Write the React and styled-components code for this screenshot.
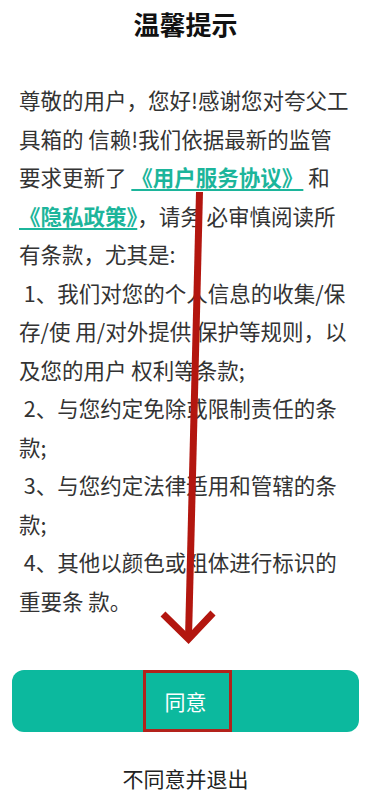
import React from "react";
import styled, { createGlobalStyle } from "styled-components";

const GlobalStyle = createGlobalStyle`
  html, body {
    margin: 0;
    padding: 0;
    background: #ffffff;
  }
  body {
    font-family: "Noto Sans CJK SC", "Noto Sans", sans-serif;
  }
`;

const Page = styled.div`
  position: relative;
  width: 371px;
  height: 796px;
  overflow: hidden;
  display: flex;
  flex-direction: column;
  background: #fff;
`;

const Title = styled.h1`
  margin: 0;
  height: 48px;
  line-height: 48px;
  text-align: center;
  font-size: 26px;
  font-weight: 700;
  color: #111;
`;

const Body = styled.p`
  margin: 33px 0 0;
  padding: 0 19px;
  font-size: 21.5px;
  line-height: 38.5px;
  color: #333;
  white-space: nowrap;
`;

const Link = styled.a`
  color: #1cb59b;
  font-weight: 700;
  text-decoration: underline;
  text-decoration-thickness: 2px;
  text-underline-offset: 3px;
`;

const Actions = styled.div`
  margin-top: 50px;
  display: flex;
  flex-direction: column;
  align-items: center;
`;

const AgreeButton = styled.button`
  width: 347px;
  height: 62px;
  border: none;
  border-radius: 12px;
  background: #0cb99e;
  display: flex;
  align-items: center;
  justify-content: center;
  padding: 0;
  cursor: pointer;
`;

const AgreeLabel = styled.span`
  position: relative;
  font-family: "Noto Sans CJK SC", sans-serif;
  font-size: 21px;
  color: #fff;
  &::after {
    content: "";
    position: absolute;
    left: -22px;
    right: -25px;
    top: -16px;
    bottom: -16px;
    border: 3px solid #b3221b;
  }
`;

const Decline = styled.button`
  margin-top: 31px;
  border: none;
  background: none;
  padding: 0;
  font-family: "Noto Sans CJK SC", sans-serif;
  font-size: 21px;
  line-height: 30px;
  color: #222;
`;

const Arrow = styled.svg`
  position: absolute;
  left: 0;
  top: 0;
  width: 371px;
  height: 796px;
  pointer-events: none;
`;

export default function App() {
  return (
    <>
      <GlobalStyle />
      <Page>
        <Title>温馨提示</Title>
        <Body>
          尊敬的用户，您好!感谢您对夸父工
          <br />
          具箱的 信赖!我们依据最新的监管
          <br />
          要求更新了 <Link>《用户服务协议》</Link> 和
          <br />
          <Link>《隐私政策》</Link>，请务 必审慎阅读所
          <br />
          有条款，尤其是:
          <br />
          &nbsp;1、我们对您的个人信息的收集/保
          <br />
          存/使 用/对外提供 保护等规则，以
          <br />
          及您的用户 权利等条款;
          <br />
          &nbsp;2、与您约定免除或限制责任的条
          <br />
          款;
          <br />
          &nbsp;3、与您约定法律适用和管辖的条
          <br />
          款;
          <br />
          &nbsp;4、其他以颜色或粗体进行标识的
          <br />
          重要条 款。
        </Body>
        <Actions>
          <AgreeButton>
            <AgreeLabel>同意</AgreeLabel>
          </AgreeButton>
          <Decline>不同意并退出</Decline>
        </Actions>
        <Arrow viewBox="0 0 371 796">
          <g fill="none" stroke="#b3160f" strokeWidth="7" strokeLinejoin="miter">
            <line x1="199.5" y1="192" x2="188.5" y2="638" />
            <polyline points="163,614 188.5,639 213,613" />
          </g>
        </Arrow>
      </Page>
    </>
  );
}
